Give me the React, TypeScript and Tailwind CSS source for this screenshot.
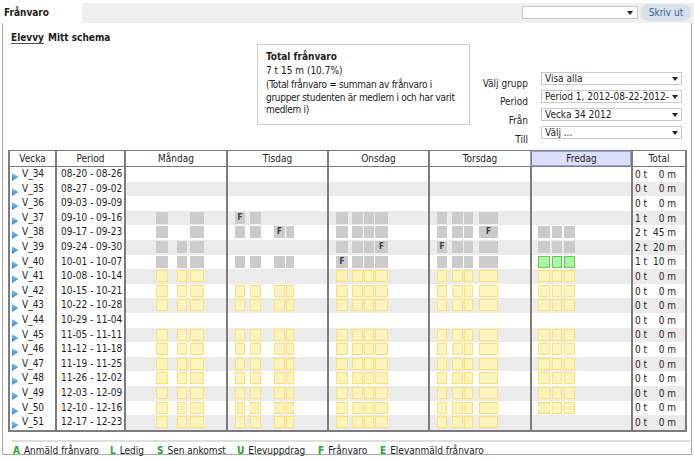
import React from "react";

type Kind = "g" | "y" | "n";
type Block = { i: number; k: Kind; f?: boolean };

// block slots per day: [left, width] relative to the cell's inner edge
const slots: Array<Array<[number, number]>> = [
  [[30, 12], [51, 10], [64, 14]],
  [[7, 10], [22, 11], [46, 11], [58, 8]],
  [[7, 12], [23, 11], [35, 10], [46, 13]],
  [[7, 10], [22, 11], [34, 9], [49, 19]],
  [[6, 12], [20, 10], [32, 11]],
];

const days = ["Måndag", "Tisdag", "Onsdag", "Torsdag", "Fredag"];

function all(day: number, k: Kind): Block[] {
  return slots[day].map((_, i) => ({ i, k }));
}

const yellowWeek: Block[][] = [0, 1, 2, 3, 4].map((d) => all(d, "y"));

const weeks: Array<{ v: string; p: string; days: Block[][]; t: string; m: string }> = [
  { v: "V_34", p: "08-20 - 08-26", days: [[], [], [], [], []], t: "0", m: "0" },
  { v: "V_35", p: "08-27 - 09-02", days: [[], [], [], [], []], t: "0", m: "0" },
  { v: "V_36", p: "09-03 - 09-09", days: [[], [], [], [], []], t: "0", m: "0" },
  {
    v: "V_37",
    p: "09-10 - 09-16",
    days: [
      [{ i: 0, k: "g" }, { i: 2, k: "g" }],
      [{ i: 0, k: "g", f: true }, { i: 1, k: "g" }],
      all(2, "g"),
      all(3, "g"),
      [],
    ],
    t: "1",
    m: "0",
  },
  {
    v: "V_38",
    p: "09-17 - 09-23",
    days: [
      [{ i: 0, k: "g" }, { i: 2, k: "g" }],
      [{ i: 0, k: "g" }, { i: 1, k: "g" }, { i: 2, k: "g", f: true }, { i: 3, k: "g" }],
      all(2, "g"),
      [{ i: 0, k: "g" }, { i: 1, k: "g" }, { i: 2, k: "g" }, { i: 3, k: "g", f: true }],
      all(4, "g"),
    ],
    t: "2",
    m: "45",
  },
  {
    v: "V_39",
    p: "09-24 - 09-30",
    days: [
      all(0, "g"),
      [],
      [{ i: 0, k: "g" }, { i: 1, k: "g" }, { i: 2, k: "g" }, { i: 3, k: "g", f: true }],
      [{ i: 0, k: "g", f: true }, { i: 1, k: "g" }, { i: 2, k: "g" }, { i: 3, k: "g" }],
      all(4, "g"),
    ],
    t: "2",
    m: "20",
  },
  {
    v: "V_40",
    p: "10-01 - 10-07",
    days: [
      all(0, "g"),
      all(1, "g"),
      [{ i: 0, k: "g", f: true }, { i: 1, k: "g" }, { i: 2, k: "g" }, { i: 3, k: "g" }],
      all(3, "g"),
      all(4, "n"),
    ],
    t: "1",
    m: "10",
  },
  { v: "V_41", p: "10-08 - 10-14", days: [all(0, "y"), [], all(2, "y"), all(3, "y"), all(4, "y")], t: "0", m: "0" },
  { v: "V_42", p: "10-15 - 10-21", days: yellowWeek, t: "0", m: "0" },
  { v: "V_43", p: "10-22 - 10-28", days: yellowWeek, t: "0", m: "0" },
  { v: "V_44", p: "10-29 - 11-04", days: [[], [], [], [], []], t: "0", m: "0" },
  { v: "V_45", p: "11-05 - 11-11", days: yellowWeek, t: "0", m: "0" },
  { v: "V_46", p: "11-12 - 11-18", days: yellowWeek, t: "0", m: "0" },
  { v: "V_47", p: "11-19 - 11-25", days: yellowWeek, t: "0", m: "0" },
  { v: "V_48", p: "11-26 - 12-02", days: yellowWeek, t: "0", m: "0" },
  { v: "V_49", p: "12-03 - 12-09", days: yellowWeek, t: "0", m: "0" },
  { v: "V_50", p: "12-10 - 12-16", days: yellowWeek, t: "0", m: "0" },
  { v: "V_51", p: "12-17 - 12-23", days: [all(0, "y"), all(1, "y"), all(2, "y"), all(3, "y"), []], t: "0", m: "0" },
];

const dayWidths = ["w-[102px]", "w-[101px]", "w-[101px]", "w-[102px]", "w-[101px]"];

function Select({ label }: { label: string }) {
  return (
    <div className="w-[141px] h-[13px] border border-[#c8c8c8] bg-white flex items-center pl-[3px] pr-[3px] overflow-hidden">
      <span className="flex-1 whitespace-nowrap overflow-hidden leading-none">{label}</span>
      <svg width="6" height="4" viewBox="0 0 6 4" className="ml-[2px] shrink-0">
        <polygon points="0,0 6,0 3,4" fill="#222" />
      </svg>
    </div>
  );
}

function Arrow() {
  return (
    <svg width="7" height="8" viewBox="0 0 7 8" className="mt-[6px] shrink-0">
      <defs>
        <linearGradient id="ag" x1="0" y1="0" x2="0" y2="1">
          <stop offset="0" stopColor="#86c6f5" />
          <stop offset="1" stopColor="#2c84d4" />
        </linearGradient>
      </defs>
      <polygon points="0,0 6.5,4 0,8" fill="url(#ag)" />
    </svg>
  );
}

export default function App() {
  return (
    <div className="w-[694px] h-[461px] bg-white overflow-hidden text-[10px] text-[#1e1e1e] font-['DejaVu_Sans_Condensed','DejaVu_Sans',sans-serif]">
      {/* top bar */}
      <div className="flex h-[23px] items-center">
        <div className="w-[82px] pl-[4px] pt-[2px] font-bold">Frånvaro</div>
        <div className="flex-1 h-[20px] mt-[2px] bg-[#efefef] flex items-center justify-end pr-[3px]">
          <div className="w-[116px] h-[13px] border border-[#c8c8c8] bg-white flex items-center justify-end pr-[4px]">
            <svg width="6" height="4" viewBox="0 0 6 4">
              <polygon points="0,0 6,0 3,4" fill="#222" />
            </svg>
          </div>
          <div className="ml-[3px] h-[17px] w-[50px] rounded-[8px] bg-[#d6e1ec] text-[#3f6286] flex items-center justify-center">
            Skriv ut
          </div>
        </div>
      </div>

      <div className="mx-[2px] h-[432px] border-l border-r border-b border-[#a9a9a9]">
        {/* tabs */}
        <div className="flex gap-[4px] pl-[8px] pt-[7px] h-[21px] font-bold">
          <span className="underline underline-offset-2 decoration-[#555]">Elevvy</span>
          <span>Mitt schema</span>
        </div>

        {/* info + filters */}
        <div className="flex h-[106px]">
          <div className="ml-[254px] w-[213px] h-[81px] border border-[#cfcfcf] pl-[8px] pr-[3px] pt-[6px] leading-[12.5px]">
            <div className="font-bold">Total frånvaro</div>
            <div className="mt-[1px]">7 t 15 m (10.7%)</div>
            <div className="mt-[2px] tracking-[-0.3px]">
              (Total frånvaro = summan av frånvaro i grupper studenten är medlem i och har varit medlem i)
            </div>
          </div>
          <div className="ml-[3px] pt-[28px] flex flex-col gap-[5px]">
            {[
              ["Välj grupp", "Visa alla", "pt-[7px]"],
              ["Period", "Period 1, 2012-08-22-2012-12-21", "pt-[7px]"],
              ["Från", "Vecka 34 2012", "pt-[8px]"],
              ["Till", "Välj ...", "pt-[9px]"],
            ].map(([l, s, pt]) => (
              <div key={l} className="flex items-start h-[13px]">
                <div className={`w-[55px] text-right leading-none ${pt}`}>{l}</div>
                <div className="ml-[13px]">
                  <Select label={s} />
                </div>
              </div>
            ))}
          </div>
        </div>

        {/* table */}
        <div className="ml-[5px] w-[679px] border-t border-b-2 border-r-2 border-[#7c7c7c]">
          <div className="flex h-[16px] border-b border-[#7c7c7c]">
            <div className="w-[47px] border-l-2 border-[#7c7c7c] text-center leading-[15px]">Vecka</div>
            <div className="w-[69px] border-l-2 border-[#7c7c7c] text-center leading-[15px]">Period</div>
            {days.map((d, i) => (
              <div
                key={d}
                className={`${dayWidths[i]} border-l-2 border-[#7c7c7c] text-center leading-[15px] ${
                  d === "Fredag" ? "bg-[#dcdffc] outline outline-1 -outline-offset-1 outline-[#9aa0e6]" : ""
                }`}
              >
                {d}
              </div>
            ))}
            <div className="w-[54px] border-l-2 border-[#7c7c7c] text-center leading-[15px]">Total</div>
          </div>
          {weeks.map((w, r) => {
            const stripe = r % 2 === 1 ? "bg-[#ebebeb]" : "";
            return (
              <div key={w.v} className="flex h-[14.6px]">
                <div className="w-[47px] border-l-2 border-[#7c7c7c] flex items-start pl-[2px] gap-[3px]">
                  <Arrow />
                  <span className="leading-[14px]">{w.v}</span>
                </div>
                <div className="w-[69px] border-l-2 border-[#7c7c7c] pl-[4px] leading-[14px]">{w.p}</div>
                {w.days.map((bl, d) => (
                  <div key={d} className={`${dayWidths[d]} border-l-2 border-[#7c7c7c] relative ${stripe}`}>
                    {bl.map((b) => {
                      const [left, width] = slots[d][b.i];
                      const cls =
                        b.k === "g"
                          ? "bg-[#cbcbcb]"
                          : b.k === "y"
                          ? "bg-[#fff4bd] border-[1.5px] border-[#ffdf6e]"
                          : "bg-[#a9f7a1] border-[1.5px] border-[#62cc52]";
                      return (
                        <div
                          key={b.i}
                          className={`absolute top-[1px] h-[12px] flex items-center justify-center text-[8px] font-bold text-[#3a3a3a] ${cls}`}
                          style={{ left, width }}
                        >
                          {b.f ? "F" : ""}
                        </div>
                      );
                    })}
                  </div>
                ))}
                <div className={`w-[54px] border-l-2 border-[#7c7c7c] flex items-center pl-[2px] pr-[9px] ${stripe}`}>
                  <span>{w.t} t</span>
                  <span className="flex-1 text-right">{w.m} m</span>
                </div>
              </div>
            );
          })}
        </div>

        {/* legend */}
        <div className="ml-[9px] mr-[1px] mt-[8px] h-[2px] bg-[#dedede]" />
        <div className="flex items-center h-[15px] pl-[10px] mt-[1px]">
          {[
            ["A", "Anmäld frånvaro", "w-[97px]"],
            ["L", "Ledig", "w-[47px]"],
            ["S", "Sen ankomst", "w-[80px]"],
            ["U", "Elevuppdrag", "w-[81px]"],
            ["F", "Frånvaro", "w-[62px]"],
            ["E", "Elevanmäld frånvaro", ""],
          ].map(([k, t, w]) => (
            <div key={k} className={`${w} whitespace-nowrap`}>
              <span className="font-bold text-[#27a527]">{k}</span>
              <span className="ml-[4px]">{t}</span>
            </div>
          ))}
        </div>
      </div>
    </div>
  );
}
